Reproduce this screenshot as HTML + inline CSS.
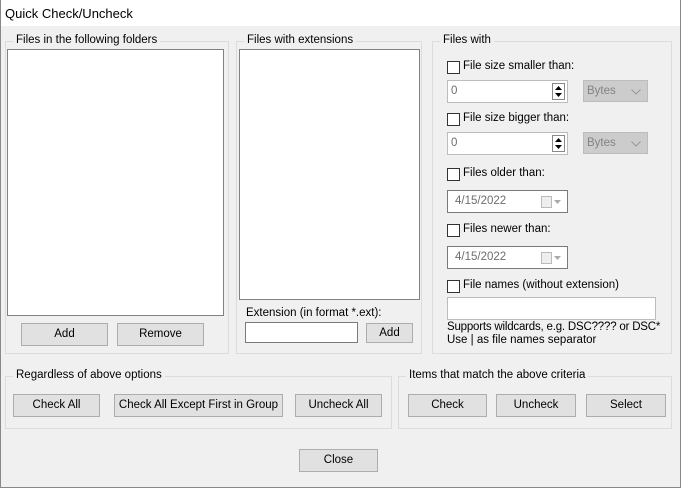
<!DOCTYPE html>
<html><head><style>
*{box-sizing:border-box;margin:0;padding:0}
body{width:681px;height:488px;background:#f0f0f0;font-family:"Liberation Sans",sans-serif;font-size:11.5px;color:#000;position:relative;overflow:hidden}
.a{position:absolute}
.title{left:0;top:0;width:681px;height:26px;background:#fff;padding:6px 0 0 5px;font-size:13px}
.win{left:0;top:0;width:681px;height:488px;border:1px solid #888;border-top:none}
.g{position:absolute;border:1px solid #dcdcdc}
.gl{position:absolute;top:-8px;left:7px;background:#f0f0f0;padding:0 3px;white-space:nowrap}
.lb{position:absolute;background:#fff;border:1px solid #828282}
.btn{position:absolute;background:#e1e1e1;border:1px solid #adadad;text-align:center;line-height:20px;white-space:nowrap}
.in{position:absolute;background:#fff;border:1px solid #7a7a7a}
.dis{position:absolute;background:#fff;border:1px solid #bcbcbc;color:#6d6d6d;padding-left:3px;line-height:20px}
.cb{position:absolute;width:13px;height:13px;border:1px solid #333;background:#fff}
.t{position:absolute;white-space:nowrap}
.cmb{position:absolute;background:#ccc;border:1px solid #bcbcbc;color:#838383;padding-left:3px;line-height:20px}
.spin{position:absolute;right:2px;top:2px;width:13px;height:17px}
</style></head><body>
<div class="a title">Quick Check/Uncheck</div>
<div class="a win"></div>

<div class="g" style="left:5px;top:41px;width:224px;height:313px"><span class="gl">Files in the following folders</span></div>
<div class="lb" style="left:7px;top:49px;width:217px;height:267px"></div>
<div class="btn" style="left:21px;top:323px;width:87px;height:23px">Add</div>
<div class="btn" style="left:117px;top:323px;width:87px;height:23px">Remove</div>

<div class="g" style="left:236px;top:41px;width:186px;height:313px"><span class="gl">Files with extensions</span></div>
<div class="lb" style="left:239px;top:49px;width:181px;height:251px"></div>
<div class="t" style="left:246px;top:307px">Extension (in format *.ext):</div>
<div class="in" style="left:245px;top:322px;width:113px;height:21px"></div>
<div class="btn" style="left:366px;top:323px;width:47px;height:20px;line-height:18px">Add</div>

<div class="g" style="left:432px;top:41px;width:240px;height:313px"><span class="gl">Files with</span></div>
<div class="cb" style="left:447px;top:61px"></div><div class="t" style="left:463px;top:60px">File size smaller than:</div>
<div class="dis" style="left:447px;top:80px;width:121px;height:23px">0
<svg class="spin" viewBox="0 0 13 17"><rect x="0.5" y="0.5" width="12" height="16" fill="#fff" stroke="#888"/><path d="M3 7L6.5 3L10 7Z M3 10L6.5 14L10 10Z" fill="#000"/></svg></div>
<div class="cmb" style="left:583px;top:80px;width:65px;height:22px">Bytes<svg style="position:absolute;right:6px;top:8px" width="10" height="6"><path d="M0.5 0.5L5 5L9.5 0.5" fill="none" stroke="#999"/></svg></div>
<div class="cb" style="left:447px;top:113px"></div><div class="t" style="left:463px;top:112px">File size bigger than:</div>
<div class="dis" style="left:447px;top:132px;width:121px;height:23px">0
<svg class="spin" viewBox="0 0 13 17"><rect x="0.5" y="0.5" width="12" height="16" fill="#fff" stroke="#888"/><path d="M3 7L6.5 3L10 7Z M3 10L6.5 14L10 10Z" fill="#000"/></svg></div>
<div class="cmb" style="left:583px;top:132px;width:65px;height:22px">Bytes<svg style="position:absolute;right:6px;top:8px" width="10" height="6"><path d="M0.5 0.5L5 5L9.5 0.5" fill="none" stroke="#999"/></svg></div>
<div class="cb" style="left:447px;top:168px"></div><div class="t" style="left:463px;top:167px">Files older than:</div>
<div class="dis" style="left:447px;top:190px;width:121px;height:23px;border-color:#7a7a7a;padding-left:7px">4/15/2022
<svg style="position:absolute;right:4px;top:5px" width="22" height="12"><rect x="0.5" y="0.5" width="10" height="11" fill="#eee" stroke="#bbb"/><path d="M13 4h7l-3.5 4z" fill="#aaa"/></svg></div>
<div class="cb" style="left:447px;top:224px"></div><div class="t" style="left:463px;top:223px">Files newer than:</div>
<div class="dis" style="left:447px;top:246px;width:121px;height:23px;border-color:#7a7a7a;padding-left:7px">4/15/2022
<svg style="position:absolute;right:4px;top:5px" width="22" height="12"><rect x="0.5" y="0.5" width="10" height="11" fill="#eee" stroke="#bbb"/><path d="M13 4h7l-3.5 4z" fill="#aaa"/></svg></div>
<div class="cb" style="left:447px;top:280px"></div><div class="t" style="left:463px;top:279px">File names (without extension)</div>
<div class="in" style="left:447px;top:297px;width:209px;height:23px;border-color:#bcbcbc"></div>
<div class="t" style="left:447px;top:321px;letter-spacing:-0.2px">Supports wildcards, e.g. DSC???? or DSC*</div>
<div class="t" style="left:447px;top:334px">Use | as file names separator</div>

<div class="g" style="left:5px;top:376px;width:387px;height:53px"><span class="gl">Regardless of above options</span></div>
<div class="btn" style="left:13px;top:394px;width:87px;height:23px">Check All</div>
<div class="btn" style="left:114px;top:394px;width:169px;height:23px">Check All Except First in Group</div>
<div class="btn" style="left:295px;top:394px;width:87px;height:23px">Uncheck All</div>

<div class="g" style="left:398px;top:376px;width:274px;height:53px"><span class="gl">Items that match the above criteria</span></div>
<div class="btn" style="left:408px;top:394px;width:79px;height:23px">Check</div>
<div class="btn" style="left:496px;top:394px;width:80px;height:23px">Uncheck</div>
<div class="btn" style="left:586px;top:394px;width:80px;height:23px">Select</div>

<div class="btn" style="left:299px;top:449px;width:79px;height:23px">Close</div>
</body></html>
